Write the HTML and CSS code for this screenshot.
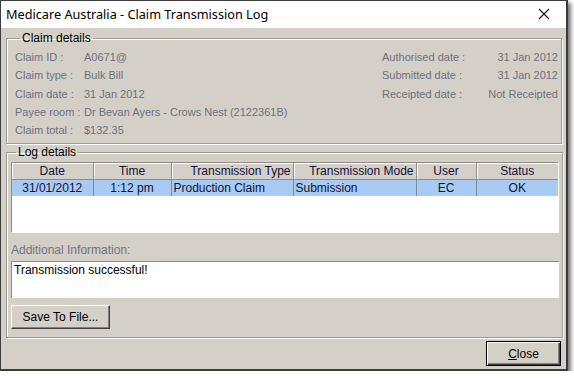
FILE: index.html
```html
<!DOCTYPE html>
<html>
<head>
<meta charset="utf-8">
<title>Claim Transmission Log</title>
<link rel="stylesheet" href="styles.css">
</head>
<body>
<div class="window">
	<div class="titlebar">
		<span class="title">Medicare Australia - Claim Transmission Log</span>
		<svg class="closeX" width="12" height="12" viewBox="0 0 12 12"><path d="M1 1L11 11M11 1L1 11" stroke="#111" stroke-width="1.1" fill="none"/></svg>
	</div>
	<div class="client">
		<fieldset class="group claim">
			<legend>Claim details</legend>
			<div class="claimCols">
				<div class="leftCol">
					<div class="row"><span class="lbl">Claim ID :</span><span>A0671@</span></div>
					<div class="row"><span class="lbl">Claim type :</span><span>Bulk Bill</span></div>
					<div class="row"><span class="lbl">Claim date :</span><span>31 Jan 2012</span></div>
					<div class="row"><span class="lbl">Payee room :</span><span>Dr Bevan Ayers - Crows Nest (2122361B)</span></div>
					<div class="row"><span class="lbl">Claim total :</span><span>$132.35</span></div>
				</div>
				<div class="rightCol">
					<div class="row"><span class="lbl2">Authorised date :</span><span class="val2">31 Jan 2012</span></div>
					<div class="row"><span class="lbl2">Submitted date :</span><span class="val2">31 Jan 2012</span></div>
					<div class="row"><span class="lbl2">Receipted date :</span><span class="val2">Not Receipted</span></div>
				</div>
			</div>
		</fieldset>
		<fieldset class="group log">
			<legend>Log details</legend>
			<div class="list">
				<table>
					<tr class="head">
						<th class="c1">Date</th><th class="c2">Time</th><th class="c3 r">Transmission Type</th><th class="c4 r">Transmission Mode</th><th class="c5">User</th><th class="c6">Status</th>
					</tr>
					<tr class="sel">
						<td class="ctr">31/01/2012</td><td class="ctr">1:12 pm</td><td>Production Claim</td><td>Submission</td><td class="ctr">EC</td><td class="ctr">OK</td>
					</tr>
				</table>
			</div>
			<div class="addLbl">Additional Information:</div>
			<div class="memo">Transmission successful!</div>
			<div class="btn save">Save To File...</div>
		</fieldset>
		<div class="footer">
			<div class="btn close"><u>C</u>lose</div>
		</div>
	</div>
</div>
</body>
</html>
```

FILE: styles.css
```css
body, div, fieldset, legend, table {padding:0; margin:0;}
body {background:#fff; font-family:"Liberation Sans", Arial, sans-serif; font-size:12px;}

.window {width:565px; height:368px; border:1px solid #3c3c3c; border-right-width:2px; border-bottom-width:2px; box-shadow:3px 3px 4px rgba(0,0,0,.55); display:flex; flex-direction:column;}
.titlebar {height:27px; background:#fff; display:flex; align-items:center; justify-content:space-between; padding:0 16px 0 5px;}
.title {font-family:"Noto Sans", sans-serif; font-size:12.7px; color:#000; margin-top:-2px;}
.closeX {margin-top:-2px;}

.client {flex:1; background:#d4d0c8; padding:3px 4px 0 5px; display:flex; flex-direction:column;}

.group {border:1px solid #9c9a95; box-shadow:inset 1px 1px #fff, 1px 1px #fff; padding:0 3px 0 4px;}
.group legend {padding:0 2px; margin-left:5px; font-size:12px; color:#000;}

.claim {padding:3px 3px 4px 8px;}
.claimCols {display:flex; justify-content:space-between; color:#6c7080; font-size:11px;}
.row {height:18.25px; line-height:18.25px; white-space:nowrap;}
.lbl {display:inline-block; width:69px;}
.rightCol {width:176px;}
.lbl2 {display:inline-block; width:92px;}
.val2 {display:inline-block; width:84px; text-align:right;}

.log {margin-top:1px; padding-top:3px; padding-bottom:8px;}
.list {height:69px; background:#fff; border:1px solid #8d8b86; border-right-color:#fff; border-bottom-color:#fff;}
table {border-collapse:collapse; table-layout:fixed; width:546px; font-size:12px; color:#10103a;}
th, td {box-sizing:border-box;}
th {font-weight:normal; height:16px; background:#d4d0c8; border-right:1px solid #8e8c87; border-bottom:1px solid #8e8c87; box-shadow:inset 1px 1px #fff; padding:0 2px; white-space:nowrap;}
th.r {text-align:right;}
.c1 {width:81px;} .c2 {width:78px;} .c3 {width:122px;} .c4 {width:123px;} .c5 {width:60px;} .c6 {width:82px; border-right:none;}
.sel td {background:#a8cbf3; height:17px; border-right:1px solid #7d8ba0; padding:0 2px; white-space:nowrap; overflow:hidden;}
.sel td:last-child {border-right:none;}
.ctr {text-align:center;}

.addLbl {margin-top:10px; color:#70737f; font-size:12px; height:14px; line-height:14px;}
.memo {margin-top:4px; height:37px; box-sizing:border-box; background:#fff; border-top:1px solid #8d8b86; border-left:1px solid #8d8b86; padding:1px 2px; color:#000;}

.btn {display:flex; align-items:center; justify-content:center; box-sizing:border-box; background:#d4d0c8; color:#000; font-size:12px; border:1px solid; border-color:#fff #404040 #404040 #fff; box-shadow:inset -1px -1px #808080;}
.save {margin-top:7px; width:99px; height:24px;}

.footer {display:flex; justify-content:flex-end; padding-top:3px; padding-right:1px;}
.close {width:75px; height:25px; border:1px solid #000; box-shadow:inset 1px 1px #fff, inset -1px -1px #404040, inset -2px -2px #808080;}
```
